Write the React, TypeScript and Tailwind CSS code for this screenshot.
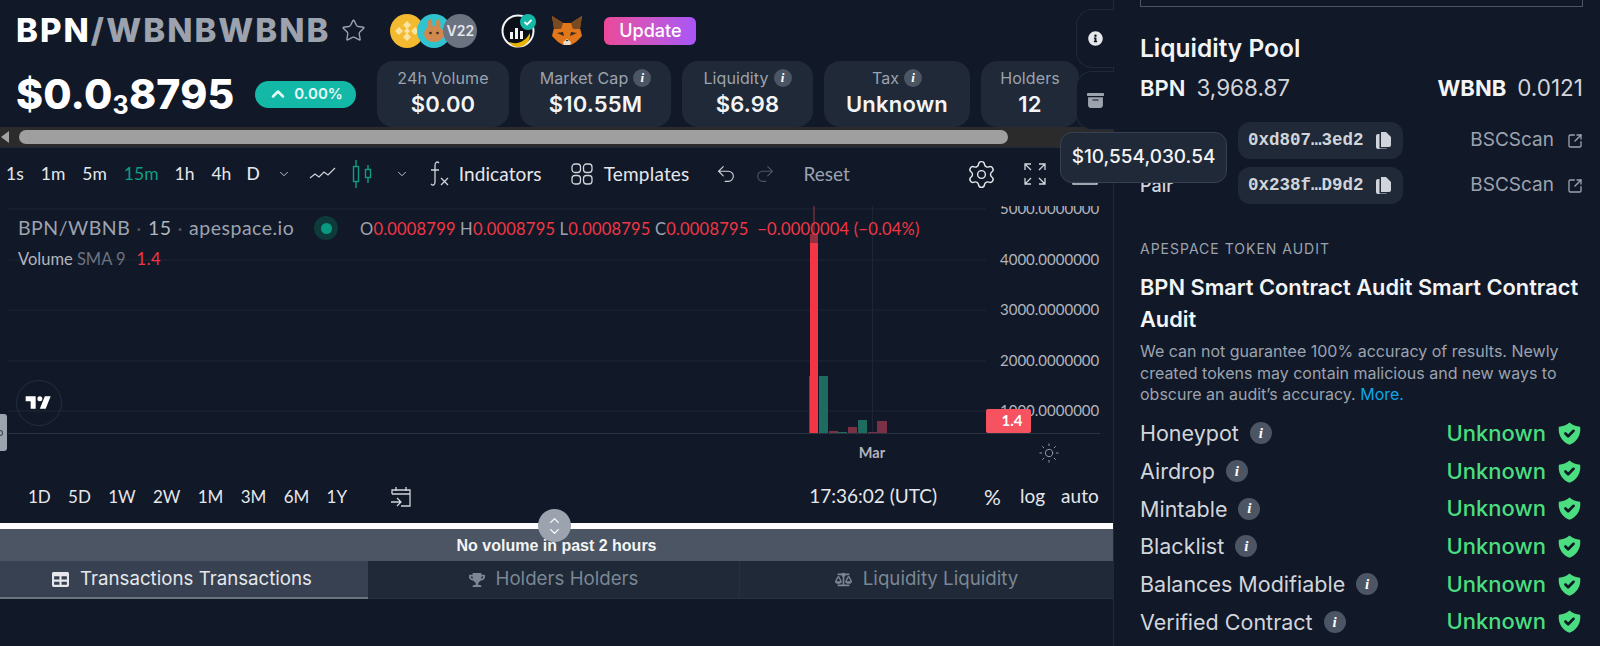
import React from "react";
import { Star, ChevronUp, ChevronDown, Settings, Undo2, Redo2, Sun, SquareArrowOutUpRight } from "lucide-react";
import { FaTable, FaTrophy, FaBalanceScale, FaInfoCircle } from "react-icons/fa";
import { HiShieldCheck } from "react-icons/hi";
import { BsArchiveFill } from "react-icons/bs";

const head = "font-['Inter','Liberation_Sans',sans-serif]";
const tv = "font-['Lato','Open_Sans',sans-serif]";

function I({ size = "s" }: { size?: "s" | "l" }) {
  const c = size === "s" ? "w-[18px] h-[18px] text-[13px]" : "w-[22px] h-[22px] text-[15px]";
  return (
    <span className={`inline-flex items-center justify-center rounded-full bg-[#4b5563] text-white italic font-bold font-['Liberation_Serif',serif] ${c}`}>i</span>
  );
}

function Stat({ label, value, w, info }: { label: string; value: string; w: string; info?: boolean }) {
  return (
    <div className={`${w} h-[66px] rounded-2xl bg-[#1f2937] flex flex-col items-center justify-center gap-[1px] pb-[3px]`}>
      <div className="flex items-center gap-[5px] text-[16px] leading-[22px] text-[#9ca3af] tracking-[0.1px]">
        {label}
        {info && <I />}
      </div>
      <div className="text-[22px] leading-[28px] font-semibold text-[#f3f4f6] tracking-[0.2px]">{value}</div>
    </div>
  );
}

function CoinIcons() {
  return (
    <div className="flex items-center ml-[24px]">
      <svg width="34" height="34" viewBox="0 0 34 34">
        <circle cx="17" cy="17" r="17" fill="#f3ba2f" />
        <g fill="#fbe3a4">
          <path d="M17 7l4 4-4 4-4-4z M17 19l4 4-4 4-4-4z M9 13l4 4-4 4-4-4z M25 13l4 4-4 4-4-4z M17 14l3 3-3 3-3-3z" />
        </g>
      </svg>
      <svg className="-ml-[7px]" width="34" height="34" viewBox="0 0 34 34">
        <circle cx="17" cy="17" r="17" fill="#2fc3cf" />
        <ellipse cx="13" cy="11" rx="2.5" ry="6" fill="#c98a53" />
        <ellipse cx="21" cy="11" rx="2.5" ry="6" fill="#c98a53" />
        <ellipse cx="17" cy="20" rx="10" ry="8" fill="#d1884f" />
        <circle cx="13.5" cy="19" r="1.3" fill="#3b2a20" />
        <circle cx="20.5" cy="19" r="1.3" fill="#3b2a20" />
      </svg>
      <div className="-ml-[8px] w-[34px] h-[34px] rounded-full bg-[#6b7280] flex items-center justify-center text-[14px] font-semibold text-[#e5e7eb]">V22</div>
    </div>
  );
}

function AuditIcon() {
  return (
    <svg className="ml-[24px]" width="36" height="34" viewBox="0 0 36 34">
      <circle cx="17" cy="17" r="15.5" fill="#0b0f18" stroke="#f3f4f6" strokeWidth="2" />
      <path d="M9 25v-7h3v7z M14 25V14h3v11z M19 25v-8h3v8z" fill="#f3f4f6" />
      <path d="M8 28c8 3 16 0 21-9 1 8-5 14-12 14-4 0-7-2-9-5z" fill="#eab308" />
      <circle cx="27" cy="8" r="8" fill="#14b8a6" />
      <path d="M23.5 8l2.5 2.5 4.5-4.5" fill="none" stroke="#fff" strokeWidth="1.8" />
    </svg>
  );
}

function Fox() {
  return (
    <svg className="ml-[14px]" width="32" height="32" viewBox="0 0 32 32">
      <path d="M1 1l11 7h8l11-7-2 12 2 8-6 6-5 3h-8l-5-3-6-6 2-8z" fill="#e2761b" />
      <path d="M1 1l11 7-2 6H3z M31 1L20 8l2 6h7z" fill="#7a4a20" />
      <path d="M6 18l6-1 1 4z M26 18l-6-1-1 4z" fill="#3b2a20" />
      <path d="M12 27l4-3 4 3-1 3h-6z" fill="#e8dccf" />
      <path d="M14.5 25h3l-1.5 1.500z" fill="#222" />
    </svg>
  );
}

function Header() {
  return (
    <div className={`${head}`}>
      <div className="h-[61px] flex items-center pl-[16px]">
        <div className="text-[33px] font-extrabold tracking-[2px] leading-none text-[#9ca3af]">
          <span className="text-white">BPN</span>/WBNBWBNB
        </div>
        <Star className="ml-[11px] text-[#9ca3af]" size={25} strokeWidth={1.3} />
        <CoinIcons />
        <AuditIcon />
        <Fox />
        <div className="ml-[21px] w-[92px] h-[28px] rounded-md bg-gradient-to-r from-[#ec4899] to-[#a855f7] flex items-center justify-center text-[18px] text-white font-medium">Update</div>
      </div>
      <div className="h-[66px] flex items-center pl-[16px]">
        <div className="w-[239px] text-[41px] font-extrabold leading-none text-white tracking-[0.2px]">
          $0.0<span className="text-[25px] font-bold relative top-[5px]">3</span>8795
        </div>
        <div className="w-[101px] h-[27px] rounded-full bg-[#14b8a6] flex items-center justify-center gap-[6px] text-[15px] font-semibold text-[#e5f9f6]">
          <ChevronUp size={20} strokeWidth={3} />
          0.00%
        </div>
        <div className="ml-[21px] flex gap-[11px]">
          <Stat label="24h Volume" value="$0.00" w="w-[132px]" />
          <Stat label="Market Cap" value="$10.55M" w="w-[151px]" info />
          <Stat label="Liquidity" value="$6.98" w="w-[131px]" info />
          <Stat label="Tax" value="Unknown" w="w-[146px]" info />
          <Stat label="Holders" value="12" w="w-[98px]" />
        </div>
      </div>
    </div>
  );
}

function ScrollBar() {
  return (
    <div className="h-[20px] bg-[#2b2b2b] flex items-center">
      <div className="w-0 h-0 ml-[1px] border-y-[6px] border-y-transparent border-r-[8px] border-r-[#a3a3a3]" />
      <div className="ml-[10px] w-[989px] h-[14px] rounded-full bg-[#9f9f9f]" />
    </div>
  );
}

function Toolbar() {
  const btn = "text-[17.500px] text-[#e5e7eb]";
  const big = "text-[19px] text-[#e5e7eb]";
  return (
    <div className={`${tv} h-[58px] pb-[6px] flex items-center text-[#d1d5db]`}>
      <span className={`${btn} ml-[6px]`}>1s</span>
      <span className={`${btn} ml-[17px]`}>1m</span>
      <span className={`${btn} ml-[17px]`}>5m</span>
      <span className="text-[17.500px] text-[#0f9d86] ml-[17px]">15m</span>
      <span className={`${btn} ml-[16px]`}>1h</span>
      <span className={`${btn} ml-[17px]`}>4h</span>
      <span className={`${btn} ml-[15px] font-medium`}>D</span>
      <ChevronDown className="ml-[17px]" size={14} strokeWidth={1.5} />
      <svg className="ml-[18px]" width="28" height="18" viewBox="0 0 28 18" fill="none" stroke="#d1d5db" strokeWidth="1.2">
        <path d="M1 13l5-4 4 3 5-5 4 3 7-7" />
      </svg>
      <svg className="ml-[14px]" width="22" height="30" viewBox="0 0 22 30" fill="none" stroke="#0f9d86" strokeWidth="1.4">
        <rect x="2.500" y="7.500" width="5" height="15" />
        <path d="M5 1v6M5 23v6" />
        <rect x="14.500" y="10.500" width="5" height="8" />
        <path d="M17 6v4M17 19v5" />
      </svg>
      <ChevronDown className="ml-[22px]" size={14} strokeWidth={1.5} />
      <svg className="ml-[19px]" width="22" height="28" viewBox="0 0 22 28" fill="none" stroke="#d1d5db" strokeWidth="1.3">
        <path d="M11 3c-2-2-4-1-4 3v16c0 3-2 4-4 2M3 10h8M13 18l7 7M20 18l-7 7" />
      </svg>
      <span className={`${big} ml-[9px] tracking-[0.1px]`}>Indicators</span>
      <svg className="ml-[29px]" width="22" height="22" viewBox="0 0 22 22" fill="none" stroke="#d1d5db" strokeWidth="1.3">
        <rect x="1" y="1" width="8.500" height="8.500" rx="3" />
        <rect x="12.500" y="1" width="8.500" height="8.500" rx="3" />
        <rect x="1" y="12.500" width="8.500" height="8.500" rx="3" />
        <rect x="12.500" y="12.500" width="8.500" height="8.500" rx="3" />
      </svg>
      <span className={`${big} ml-[11px] tracking-[0.2px]`}>Templates</span>
      <Undo2 className="ml-[25px]" size={22} strokeWidth={1.2} />
      <Redo2 className="ml-[17px] text-[#4b5563]" size={22} strokeWidth={1.2} />
      <span className="text-[19px] text-[#9ca3af] ml-[28px]">Reset</span>
      <Settings className="ml-[116px] text-[#e5e7eb]" size={31} strokeWidth={1.1} />
      <svg className="ml-[26px]" width="24" height="24" viewBox="0 0 24 24" fill="none" stroke="#d1d5db" strokeWidth="1.3">
        <path d="M2 8V2h6M2 2l6 6M22 8V2h-6M22 2l-6 6M2 16v6h6M2 22l6-6M22 16v6h-6M22 22l-6-6" />
      </svg>
      <svg className="ml-[24px]" width="28" height="24" viewBox="0 0 28 24" fill="none" stroke="#d1d5db" strokeWidth="1.3">
        <path d="M2 6h6l2-4h8l2 4h6v16H2z" />
        <circle cx="14" cy="13" r="5" />
      </svg>
    </div>
  );
}

const axis = [
  ["5000.0000000", 208],
  ["4000.0000000", 259],
  ["3000.0000000", 309],
  ["2000.0000000", 360],
  ["1000.0000000", 410],
] as const;

function Chart() {
  const o = 205;
  return (
    <div className="relative h-[270px] overflow-hidden">
      <svg className={`absolute inset-0 ${tv}`} width="1113" height="270" viewBox={`0 ${o} 1113 270`}>
        {axis.map(([, y]) => (
          <line key={y} x1="8" x2="986" y1={y} y2={y} stroke="#1d2634" />
        ))}
        <line x1="8" x2="986" y1="432.500" y2="432.500" stroke="#2a3342" />
        <line x1="986" x2="1100" y1="432.500" y2="432.500" stroke="#2a3342" />
        <line x1="872.500" x2="872.500" y1="205" y2="432" stroke="#1d2634" />
        <line x1="814" x2="814" y1="204" y2="233" stroke="#a33648" />
        <rect x="809" y="375" width="2" height="57" fill="#8a3348" />
        <rect x="810" y="233" width="8" height="9" fill="#93303f" />
        <rect x="810" y="242" width="8" height="190" fill="#f23645" />
        <rect x="819" y="375" width="9" height="57" fill="#1e6b60" />
        <rect x="829" y="430" width="9" height="2" fill="#7a3146" />
        <rect x="838" y="431" width="9" height="1" fill="#1e6b60" />
        <rect x="848" y="426" width="9" height="6" fill="#7a3146" />
        <rect x="858" y="419" width="9" height="13" fill="#1e6b60" />
        <rect x="868" y="431" width="9" height="1" fill="#7a3146" />
        <rect x="877" y="420" width="10" height="12" fill="#7a3146" />
        {axis.map(([t, y]) => (
          <text key={t} x="1000" y={y + 5} fontSize="15" fill="#b2b5be">{t}</text>
        ))}
        <rect x="986" y="408" width="45" height="24" rx="2" fill="#f7525f" />
        <text x="1012" y="425" textAnchor="middle" fontSize="15" fontWeight="700" fill="#fff">1.4</text>
        <text x="872" y="457" textAnchor="middle" fontSize="14.500" fontWeight="700" fill="#b2b5be">Mar</text>
      </svg>
      <Sun className="absolute left-[1038px] top-[236px] text-[#9ca3af]" size={22} strokeWidth={1} />
      <div className={`absolute left-[18px] top-[9px] flex items-center ${tv} text-[19.500px] leading-[26px] text-[#9ca3af] tracking-[0.5px]`}>
        BPN/WBNB <span className="mx-[6px] text-[#4b5563]">·</span> <span className="text-[#b2b5be]">15</span> <span className="mx-[6px] text-[#4b5563]">·</span> apespace.io
        <span className="ml-[20px] w-[24px] h-[24px] rounded-full bg-[#0f3a3a] flex items-center justify-center"><span className="w-[11px] h-[11px] rounded-full bg-[#089981]" /></span>
      </div>
      <div className={`absolute left-[360px] top-[11px] ${tv} text-[16.500px] leading-[24px] text-[#f23645] tracking-[0.2px] whitespace-pre`}>
        <span className="text-[#9ca3af]">O</span>0.0008799 <span className="text-[#9ca3af]">H</span>0.0008795 <span className="text-[#9ca3af]">L</span>0.0008795 <span className="text-[#9ca3af]">C</span>0.0008795  −0.0000004 (−0.04%)
      </div>
      <div className={`absolute left-[18px] top-[41px] ${tv} text-[16.500px] leading-[24px] text-[#b2b5be] flex gap-[11px]`}>
        <span>Volume <span className="text-[#6b7280]">SMA 9</span></span>
        <span className="text-[#f23645] tracking-[0.5px]">1.4</span>
      </div>
      <div className="absolute left-[16px] top-[174px] w-[46px] h-[46px] rounded-full border border-[#262f3d] flex items-center justify-center">
        <svg width="30" height="24" viewBox="0 0 36 28"><path fill="#fff" d="M14 6H2v6h6v9h6V6zm12 15h-7l6-15h7l-6 15zm-7-9a3 3 0 100-6 3 3 0 000 6z" /></svg>
      </div>
      <div className="absolute left-0 top-[208px] w-[7px] h-[37px] rounded-r-[3px] bg-[#9ca3af] flex items-center">
        <span className="w-[3px] h-[6px] rounded-r-full border border-l-0 border-[#374151]" />
      </div>
    </div>
  );
}

function RangeBar() {
  const r = ["1D", "5D", "1W", "2W", "1M", "3M", "6M", "1Y"];
  return (
    <div className={`${tv} h-[47px] pb-[6px] flex items-center pl-[28px] pr-[14px] text-[17px] text-[#e5e7eb]`}>
      <div className="flex gap-[17.300px]">
        {r.map((x) => (<span key={x}>{x}</span>))}
      </div>
      <svg className="ml-[42px]" width="24" height="24" viewBox="0 0 24 24" fill="none" stroke="#d1d5db" strokeWidth="1.3">
        <path d="M3 9V5h18v16h-9M3 9h18M7 2v4M17 2v4M2 17h10M8 13l4 4-4 4" />
      </svg>
      <span className="ml-auto text-[19px]">17:36:02 (UTC)</span>
      <span className="ml-[47px] text-[21px]">%</span>
      <span className="ml-[19px] text-[19px]">log</span>
      <span className="ml-[16px] text-[19px] tracking-[0.1px]">auto</span>
    </div>
  );
}

function Tabs() {
  return (
    <div className={`${head} flex h-[38px] text-[18.700px]`}>
      <div className="w-[368px] bg-[#374151] border-b-2 border-[#6b7280] text-[#e5e7eb] flex items-center justify-center gap-[11px] pr-[4px]">
        <FaTable size={17} /> Transactions Transactions
      </div>
      <div className="w-[372px] bg-[#1f2937] border-b border-[#263040] border-r text-[#7b8794] flex items-center justify-center gap-[11px]">
        <FaTrophy size={16} /> Holders Holders
      </div>
      <div className="flex-1 bg-[#1f2937] border-b border-[#263040] text-[#7b8794] flex items-center justify-center gap-[11px]">
        <FaBalanceScale size={17} /> Liquidity Liquidity
      </div>
    </div>
  );
}

function Copy() {
  return (
    <svg width="15" height="17" viewBox="0 0 15 17" fill="#d1d5db">
      <path d="M5 0h5l5 5v8a2 2 0 01-2 2H5V0z" />
      <path d="M0 4a2 2 0 012-2h1.500v14.500H11A1.500 1.500 0 019.500 17H2a2 2 0 01-2-2z" />
    </svg>
  );
}

function Addr({ label, addr }: { label: string; addr: string }) {
  return (
    <div className="flex items-center h-[37px]">
      <span className="w-[98px] text-[18px] font-medium text-[#d1d5db]">{label}</span>
      <div className="w-[165px] h-[37px] rounded-xl bg-[#1f2937] flex items-center pl-[10px] gap-[12px] font-['Liberation_Mono',monospace] font-bold text-[17.500px] text-[#d1d5db] whitespace-nowrap">
        {addr}
        <Copy />
      </div>
      <span className="ml-auto text-[19px] text-[#9ca3af]">BSCScan</span>
      <SquareArrowOutUpRight className="ml-[13px] text-[#9ca3af]" size={16} strokeWidth={2} />
    </div>
  );
}

function AuditRow({ label }: { label: string }) {
  return (
    <div className="flex items-center h-[37.700px]">
      <span className="text-[21.500px] text-[#d1d5db]">{label}</span>
      <span className="ml-[11px] inline-flex"><I size="l" /></span>
      <span className="ml-auto text-[22px] font-medium text-[#4ade80]">Unknown</span>
      <HiShieldCheck className="ml-[10px] text-[#4ade80]" size={27} />
    </div>
  );
}

function RightPanel() {
  return (
    <div className={`${head} flex-1 pl-[26px] pr-[17px] overflow-hidden`}>
      <div className="h-[7px] border-x border-b border-[#4b5563]" />
      <h2 className="mt-[26px] text-[24.500px] leading-[30px] font-semibold text-[#f3f4f6]">Liquidity Pool</h2>
      <div className="mt-[10px] flex items-center leading-[30px]">
        <span className="text-[22px] font-semibold text-[#f3f4f6]">BPN</span>
        <span className="ml-[11px] text-[22.500px] text-[#d1d5db]">3,968.87</span>
        <span className="ml-auto text-[22px] font-bold text-[#f3f4f6]">WBNB</span>
        <span className="ml-[11px] text-[22.500px] text-[#d1d5db]">0.0121</span>
      </div>
      <div className="mt-[19px] flex flex-col gap-[8px]">
        <Addr label="Token" addr="0xd807…3ed2" />
        <Addr label="Pair" addr="0x238f…D9d2" />
      </div>
      <div className="mt-[35px] text-[14px] leading-[20px] tracking-[1px] text-[#9ca3af]">APESPACE TOKEN AUDIT</div>
      <h3 className="mt-[12px] -mr-[8px] text-[21.800px] leading-[32px] font-semibold text-[#f3f4f6]">BPN Smart Contract Audit Smart Contract Audit</h3>
      <p className="mt-[6px] text-[16px] leading-[21.500px] text-[#9ca3af]">
        We can not guarantee 100% accuracy of results. Newly created tokens may contain malicious and new ways to obscure an audit’s accuracy. <span className="text-[#0ea5e9]">More.</span>
      </p>
      <div className="mt-[9px]">
        {["Honeypot", "Airdrop", "Mintable", "Blacklist", "Balances Modifiable", "Verified Contract"].map((l) => (
          <AuditRow key={l} label={l} />
        ))}
      </div>
    </div>
  );
}

export default function App() {
  return (
    <div className="relative w-[1600px] h-[646px] overflow-hidden bg-[#111827] flex">
      <div className="w-[1114px] shrink-0 border-r border-[#1f2937] flex flex-col">
        <Header />
        <ScrollBar />
        <div className="h-0 border-t border-[#1f2937]" />
        <Toolbar />
        <Chart />
        <RangeBar />
        <div className="h-[6px] bg-white" />
        <div className="h-[32px] bg-[#4b5563] flex items-end justify-center pb-[3px] font-['Liberation_Sans',sans-serif] font-bold text-[16px] text-[#f3f4f6]">
          No volume in past 2 hours
        </div>
        <Tabs />
      </div>
      <RightPanel />

      <div className="absolute left-[1076px] top-[9px] w-[38px] h-[59px] rounded-l-2xl border border-r-0 border-[#1f2937] bg-[#111827] flex items-center justify-center text-[#e5e7eb]">
        <FaInfoCircle size={15} />
      </div>
      <div className="absolute left-[1076px] top-[71px] w-[38px] h-[59px] rounded-l-2xl border border-r-0 border-[#1f2937] bg-[#111827] flex items-center justify-center text-[#9ca3af]">
        <BsArchiveFill size={17} />
      </div>
      <div className={`${head} absolute left-[1060px] top-[132px] w-[167px] h-[51px] rounded-xl border border-[#374151] bg-[#1f2937] flex items-center justify-center text-[19px] font-medium text-[#f3f4f6]`}>
        $10,554,030.54
      </div>
      <div className="absolute left-[538px] top-[509px] w-[33px] h-[33px] rounded-full bg-[#9ca3af] flex flex-col items-center justify-center text-white">
        <ChevronUp size={15} className="-mb-[2px]" />
        <ChevronDown size={15} className="-mt-[2px]" />
      </div>
    </div>
  );
}
